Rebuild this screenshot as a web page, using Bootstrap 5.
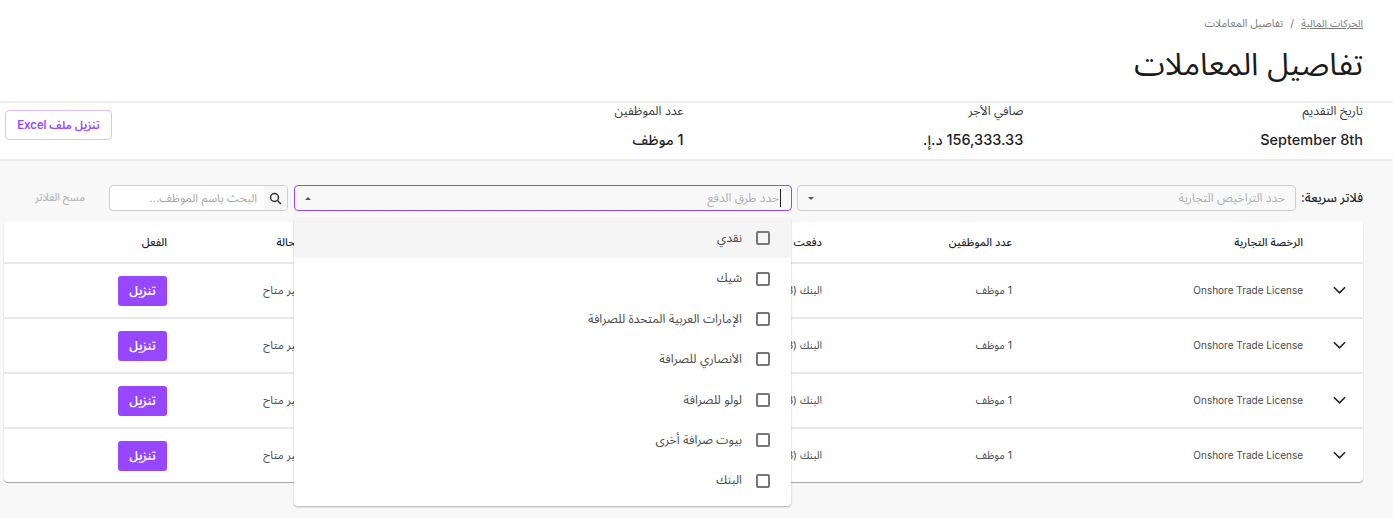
<!DOCTYPE html>
<html lang="ar" dir="rtl">
<head>
<meta charset="utf-8">
<title>تفاصيل المعاملات</title>
<link rel="stylesheet" href="https://cdn.jsdelivr.net/npm/bootstrap@5.3.0/dist/css/bootstrap.min.css">
<style>
html,body{height:518px;overflow:hidden}
body{font-family:Inter,"Noto Sans Arabic","Noto Sans","DejaVu Sans",sans-serif;background:#f8f8f8;color:#1f1f1f;font-size:11px}
.gutter{padding-right:30px;padding-left:4px}
.top-head{background:#fff;height:103px;border-bottom:2px solid #ececec;padding-top:15px}
.crumbs{font-size:10.7px;line-height:18px;color:#7a7a7a;display:flex;gap:7px}
.crumbs a{color:#7a7a7a;font-size:10.4px}
.page-title{font-size:31px;font-weight:400;line-height:40px;margin:11px 0 0;color:#1a1a1a}
.stats{background:#fff;height:58px;border-bottom:2px solid #ececec}
.stat-label{font-size:12.3px;line-height:16px;color:#3a3a3a}
.stat-value{font-size:14.5px;font-weight:500;line-height:20px;margin-top:11px}
.excel-btn{width:107px;height:30px;margin-top:7px;margin-left:1px;padding:0;font-size:11.3px;font-weight:600;color:#9747ff;background:#fff;border:1px solid #d9bfff;border-radius:4px}
.filters{height:26px;margin-top:24px;gap:6px}
.quick{font-size:12.5px;font-weight:500;width:61px;line-height:26px;white-space:nowrap}
.pick{position:relative;height:26px;border:1px solid #cfcfcf;border-radius:4px;display:flex;align-items:center;justify-content:space-between;padding:0 10px;color:#b0b0b0;font-size:12px}
.pick-a{width:499px;background:#f8f8f8}
.pick-b{width:498px;margin-right:-1px;border-color:#9747ff;background:#f8f8f8}
.typing{border-right:1px solid #222;padding-right:1px}
.pick-menu{position:absolute;top:32px;right:0;width:497px;height:288px;background:#fff;border-radius:4px;box-shadow:0 1px 2px rgba(0,0,0,.3);z-index:5;color:#4a4a4a;font-size:12.2px}
.pick-item{height:40.4px;display:flex;align-items:center;gap:14px;padding-right:21px}
.pick-item.hover{background:#f5f5f5}
.tick{width:14px;height:14px;border:2px solid #777;border-radius:2px;flex:none}
.finder{width:179px;height:26px;border:1px solid #cfcfcf;border-radius:4px;background:#fff;overflow:hidden;display:flex}
.finder-icon{width:23px;background:#f6f6f6;display:flex;align-items:center;justify-content:center;flex:none}
.finder-text{flex:1;font-size:11.7px;line-height:24px;color:#a8a8a8;padding-right:7px;white-space:nowrap}
.clear-link{font-size:10.5px;font-weight:500;color:#b5b5b5;width:50px;line-height:26px;margin-right:18px;white-space:nowrap}
.sheet{background:#fff;border-radius:4px;margin-top:11px;box-shadow:0 1px 1px rgba(0,0,0,.35);overflow:hidden}
.sheet table{table-layout:fixed;width:1359px;margin:0;border-collapse:collapse}
.sheet th{height:41px;padding:0 10px;font-size:11px;font-weight:500;border-bottom:2px solid #e8e8e8;white-space:nowrap;overflow:hidden}
.sheet td{height:55px;padding:0 10px;font-size:10.5px;color:#4a4a4a;border-bottom:2px solid #e8e8e8;white-space:nowrap;overflow:hidden}
.sheet tr:last-child td{border-bottom:0;height:54px}
.sheet td.latin{font-size:10px}
.sheet td.state{font-size:11.2px}
.get-btn{display:block;width:49px;height:30px;padding:0;background:#9747ff;color:#fff;border:0;border-radius:3px;font-size:12px;font-weight:600}
.chev{display:block;margin-right:7px}
</style>
</head>
<body>
<header class="top-head gutter">
  <nav class="crumbs"><a href="#">الحركات المالية</a><span>/</span><span>تفاصيل المعاملات</span></nav>
  <h1 class="page-title">تفاصيل المعاملات</h1>
</header>
<section class="stats gutter">
  <div class="row g-0">
    <div class="col-3"><div class="stat-label">تاريخ التقديم</div><div class="stat-value">September 8th</div></div>
    <div class="col-3"><div class="stat-label">صافي الأجر</div><div class="stat-value">156,333.33 د.إ.</div></div>
    <div class="col-3"><div class="stat-label">عدد الموظفين</div><div class="stat-value">1 موظف</div></div>
    <div class="col-3 d-flex justify-content-end align-items-start"><button class="excel-btn" type="button">تنزيل ملف Excel</button></div>
  </div>
</section>
<main class="gutter">
  <div class="filters d-flex align-items-center">
    <div class="quick">فلاتر سريعة:</div>
    <div class="pick pick-a"><span>حدد التراخيص التجارية</span>
      <svg width="6" height="3" viewBox="0 0 8 4" preserveAspectRatio="none"><path d="M0 0h8L4 4z" fill="#555"/></svg></div>
    <div class="pick pick-b"><span class="typing">حدد طرق الدفع</span>
      <svg width="6" height="3" viewBox="0 0 8 4" preserveAspectRatio="none"><path d="M0 4h8L4 0z" fill="#555"/></svg>
      <div class="pick-menu">
        <div class="pick-item hover"><span class="tick"></span><span>نقدي</span></div>
        <div class="pick-item"><span class="tick"></span><span>شيك</span></div>
        <div class="pick-item"><span class="tick"></span><span>الإمارات العربية المتحدة للصرافة</span></div>
        <div class="pick-item"><span class="tick"></span><span>الأنصاري للصرافة</span></div>
        <div class="pick-item"><span class="tick"></span><span>لولو للصرافة</span></div>
        <div class="pick-item"><span class="tick"></span><span>بيوت صرافة أخرى</span></div>
        <div class="pick-item"><span class="tick"></span><span>البنك</span></div>
      </div>
    </div>
    <div class="finder">
      <span class="finder-icon"><svg width="13" height="13" viewBox="0 0 13 13" fill="none" stroke="#333" stroke-width="1.5"><circle cx="5.5" cy="5.5" r="4"/><path d="M8.5 8.5l3.5 3.5"/></svg></span>
      <span class="finder-text">البحث باسم الموظف...</span>
    </div>
    <div class="clear-link">مسح الفلاتر</div>
  </div>
  <div class="sheet">
    <table class="table-borderless">
      <colgroup><col style="width:50px"><col style="width:291px"><col style="width:190px"><col style="width:521px"><col style="width:134px"><col style="width:173px"></colgroup>
      <thead><tr><th></th><th>الرخصة التجارية</th><th>عدد الموظفين</th><th>دفعت عبر</th><th>الحالة</th><th>الفعل</th></tr></thead>
      <tbody>
        <tr><td><svg class="chev" width="13" height="9" viewBox="0 0 14 9" fill="none" stroke="#222" stroke-width="1.7"><path d="M1 1l6 6 6-6"/></svg></td><td class="latin">Onshore Trade License</td><td>1 موظف</td><td>البنك (KIB)</td><td class="state">غير متاح</td><td><button class="get-btn" type="button">تنزيل</button></td></tr>
        <tr><td><svg class="chev" width="13" height="9" viewBox="0 0 14 9" fill="none" stroke="#222" stroke-width="1.7"><path d="M1 1l6 6 6-6"/></svg></td><td class="latin">Onshore Trade License</td><td>1 موظف</td><td>البنك (KIB)</td><td class="state">غير متاح</td><td><button class="get-btn" type="button">تنزيل</button></td></tr>
        <tr><td><svg class="chev" width="13" height="9" viewBox="0 0 14 9" fill="none" stroke="#222" stroke-width="1.7"><path d="M1 1l6 6 6-6"/></svg></td><td class="latin">Onshore Trade License</td><td>1 موظف</td><td>البنك (KIB)</td><td class="state">غير متاح</td><td><button class="get-btn" type="button">تنزيل</button></td></tr>
        <tr><td><svg class="chev" width="13" height="9" viewBox="0 0 14 9" fill="none" stroke="#222" stroke-width="1.7"><path d="M1 1l6 6 6-6"/></svg></td><td class="latin">Onshore Trade License</td><td>1 موظف</td><td>البنك (KIB)</td><td class="state">غير متاح</td><td><button class="get-btn" type="button">تنزيل</button></td></tr>
      </tbody>
    </table>
  </div>
</main>
<script src="https://cdn.jsdelivr.net/npm/bootstrap@5.3.0/dist/js/bootstrap.bundle.min.js"></script>
</body>
</html>
